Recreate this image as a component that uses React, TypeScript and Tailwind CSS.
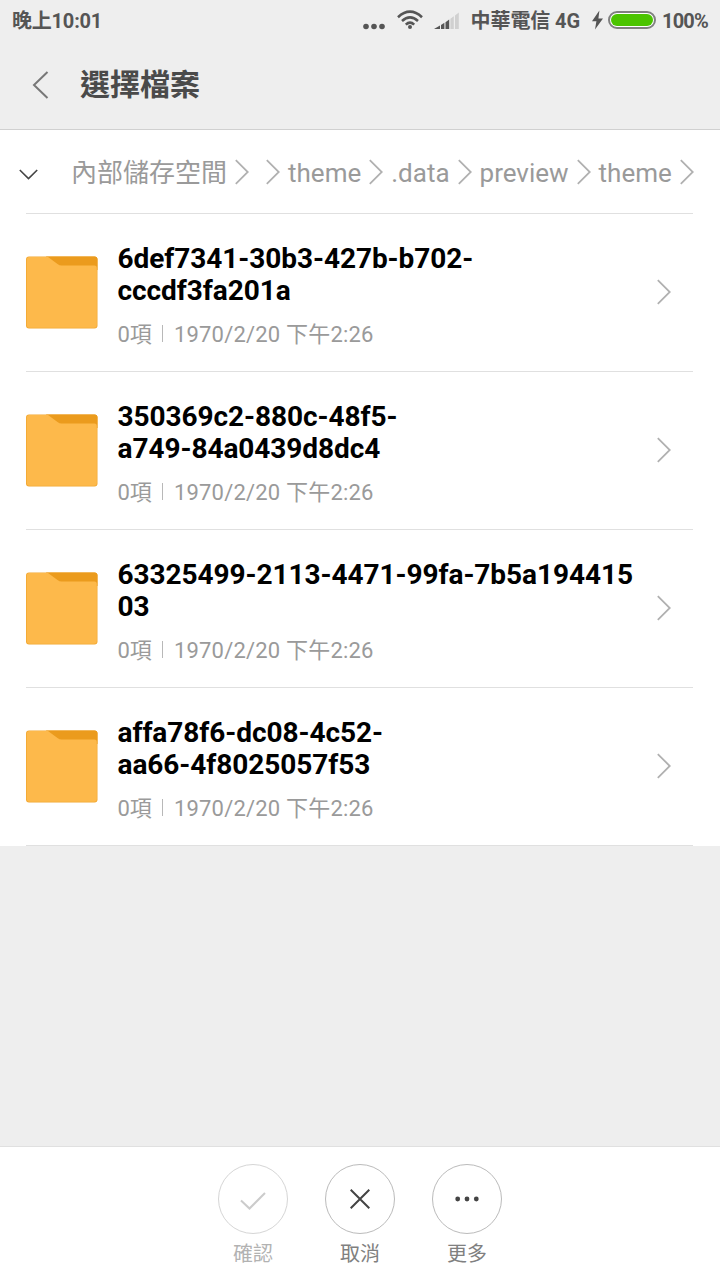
import { Fragment, type ReactNode } from "react";

const folders = [
  { lines: ["6def7341-30b3-427b-b702-", "cccdf3fa201a"] },
  { lines: ["350369c2-880c-48f5-", "a749-84a0439d8dc4"] },
  { lines: ["63325499-2113-4471-99fa-7b5a194415", "03"] },
  { lines: ["affa78f6-dc08-4c52-", "aa66-4f8025057f53"] },
];

const Chevron = () => (
  <svg className="shrink-0" width="14" height="26" viewBox="0 0 14 26" fill="none" stroke="#b0b0b0" strokeWidth="1.8">
    <path d="M.8 1.2 L12.8 13 L.8 24.8" />
  </svg>
);

const StatusBar = () => (
  <div className="flex h-10 items-center px-3 text-[20px] leading-none font-bold text-[#555]">
    <span className="mt-0.5 tracking-[-0.2px]">晚上10:01</span>
    <div className="ml-auto flex items-center">
      <svg className="mt-px" width="22" height="20" viewBox="0 0 22 20" fill="#555">
        <circle cx="3" cy="15.5" r="2.8" />
        <circle cx="11" cy="15.5" r="2.8" />
        <circle cx="19" cy="15.5" r="2.8" />
      </svg>
      <svg className="ml-3" width="26" height="20" viewBox="0 0 26 20" fill="none" stroke="#555" strokeWidth="2.6">
        <path d="M1 7.2 Q13 -3.8 25 7.2" />
        <path d="M5 11 Q13 3.8 21 11" />
        <path d="M8.8 14.6 Q13 10.8 17.2 14.6" />
        <circle cx="13" cy="17" r="2" fill="#555" stroke="none" />
      </svg>
      <svg className="ml-[11px] mt-0.5" width="25" height="18" viewBox="0 0 25 18" fill="#555">
        <path d="M0 17 L6 13.5 V17Z" />
        <path d="M7 13 L10.4 10.8 V17 H7Z" />
        <path d="M11.5 10.3 L15.2 7.5 V17 H11.5Z" />
        <path d="M16.4 6.7 L19.8 4.2 V17 H16.4Z" fill="#d0d0d0" />
        <path d="M21 3.4 L24.8 .5 V17 H21Z" fill="#d0d0d0" />
      </svg>
      <span className="mt-0.5 ml-3 tracking-[-0.1px]">中華電信 4G</span>
      <svg className="ml-3" width="11" height="20" viewBox="0 0 11 20" fill="#555">
        <path d="M7.4 .5 L0 11.2 H4.4 L3 19.5 L11 8.6 H6.4Z" />
      </svg>
      <div className="ml-[5px] h-[18px] w-12 rounded-full border-2 border-[#808080] bg-white p-px">
        <div className="h-full rounded-full bg-[#4bc400]" />
      </div>
      <span className="mt-px ml-1.5 tracking-[-0.8px]">100%</span>
    </div>
  </div>
);

const Breadcrumb = () => (
  <div className="flex h-[84px] items-center pt-px">
    <svg className="mt-[3px] ml-[19px]" width="19" height="11" viewBox="0 0 19 11" fill="none" stroke="#444" strokeWidth="1.6">
      <path d="M.8 1 L9.5 9.6 L18.2 1" />
    </svg>
    <div className="ml-[33px] flex items-center gap-2 text-[26px] leading-none whitespace-nowrap text-[#9a9a9a]">
      {["內部儲存空間", "", "theme", ".data", "preview", "theme"].map((part, i) => (
        <Fragment key={i}>
          <span className="min-w-px">{part}</span>
          <div className="-mt-0.5">
            <Chevron />
          </div>
        </Fragment>
      ))}
    </div>
  </div>
);

const FolderIcon = () => (
  <svg className="-mt-px shrink-0" width="72" height="73" viewBox="0 0 72 73">
    <rect x="0" y=".5" width="71.5" height="72" rx="3" fill="#f2a832" />
    <path d="M20 .5 H68.5 Q71.5 .5 71.5 3.5 V14 H30Z" fill="#eb9b1d" />
    <path d="M3.5 1 H22 L31.5 8 Q33.5 9.5 35.5 9.5 H68.5 Q70.8 9.5 70.8 11.5 V69 Q70.8 71.7 68 71.7 H3.5 Q.8 71.7 .8 68.5 V4 Q.8 1 3.5 1Z" fill="#fdb94b" />
  </svg>
);

const FolderRow = ({ lines }: { lines: string[] }) => (
  <div className="mr-[27px] ml-[26px] flex h-[158px] items-center border-b border-[#e0e0e0]">
    <FolderIcon />
    <div className="ml-[19.5px] pt-[9px]">
      <div className="text-[28px] leading-[31.5px] font-bold tracking-[-0.06px] text-black">
        {lines.map((line) => (
          <div key={line} className="whitespace-nowrap">{line}</div>
        ))}
      </div>
      <div className="mt-[13px] flex items-center text-[22px] leading-[32px] text-[#9a9a9a]">
        <span>0項</span>
        <span className="mr-[11px] mb-[3px] ml-[10px] h-[17px] w-px bg-[#b8b8b8]" />
        <span className="tracking-[0.2px]">1970/2/20 下午2:26</span>
      </div>
    </div>
    <div className="mr-[22.5px] mb-0.5 ml-auto">
      <Chevron />
    </div>
  </div>
);

const Action = ({ label, disabled, children }: { label: string; disabled?: boolean; children: ReactNode }) => (
  <button className={disabled ? "flex flex-col items-center opacity-60" : "flex flex-col items-center"}>
    <span className="flex size-[70px] items-center justify-center rounded-full border border-[#bbb]">{children}</span>
    <span className="mt-[9px] text-[20px] leading-[22px] text-[#808080]">{label}</span>
  </button>
);

export default function App() {
  return (
    <div className="flex h-[1280px] w-[720px] flex-col overflow-hidden bg-[#eee] font-['Roboto','Noto_Sans_CJK_TC',sans-serif]">
      <header className="h-[130px] border-b border-[#d0d0d0]">
        <StatusBar />
        <div className="flex h-[89px] items-center">
          <svg className="ml-8" width="17" height="28" viewBox="0 0 17 28" fill="none" stroke="#777" strokeWidth="2">
            <path d="M15.5 1 L2 14 L15.5 27" />
          </svg>
          <h1 className="mt-px ml-[31px] text-[30px] leading-none font-bold text-[#4a4a4a]">選擇檔案</h1>
        </div>
      </header>

      <main className="bg-white">
        <Breadcrumb />
        <div className="-mt-px mr-[27px] ml-[26px] h-px bg-[#e0e0e0]" />
        {folders.map((folder) => (
          <FolderRow key={folder.lines[0]} lines={folder.lines} />
        ))}
      </main>

      <footer className="mt-auto flex h-[134px] justify-center gap-[37px] border-t border-[#e0e0e0] bg-white pt-[17px]">
        <Action label="確認" disabled>
          <svg className="mt-1" width="26" height="18" viewBox="0 0 26 18" fill="none" stroke="#aaa" strokeWidth="2">
            <path d="M1 8.5 L9.5 16.5 L25 1" />
          </svg>
        </Action>
        <Action label="取消">
          <svg width="20" height="20" viewBox="0 0 20 20" fill="none" stroke="#444" strokeWidth="2">
            <path d="M.7 .7 L19.3 19.3 M19.3 .7 L.7 19.3" />
          </svg>
        </Action>
        <Action label="更多">
          <svg width="24" height="6" viewBox="0 0 24 6" fill="#444">
            <circle cx="2.7" cy="3" r="2.4" />
            <circle cx="12" cy="3" r="2.4" />
            <circle cx="21.3" cy="3" r="2.4" />
          </svg>
        </Action>
      </footer>
    </div>
  );
}
